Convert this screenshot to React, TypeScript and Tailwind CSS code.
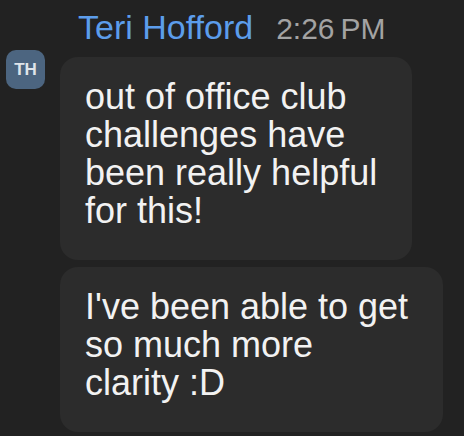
import React from "react";

const font = { fontFamily: '"Liberation Sans", Arial, sans-serif' };

function Bubble({ lines, width }: { lines: string[]; width: string }) {
  return (
    <div
      className={`${width} rounded-[18px] bg-[#2c2c2c] pl-[25px] pt-[21px] pb-[30px] text-[36px] leading-[38px] text-[#f2f2f2]`}
    >
      {lines.map((l) => (
        <div key={l} className="whitespace-nowrap">
          {l}
        </div>
      ))}
    </div>
  );
}

export default function App() {
  return (
    <div className="flex h-[436px] w-[464px] overflow-hidden bg-[#222222]" style={font}>
      <div className="w-[60px] shrink-0 pl-[6px] pt-[50px]">
        <div className="flex h-[39px] w-[39px] items-center justify-center rounded-[10px] bg-[#4c6580] text-[17px] font-bold text-[#dfe4ea]">
          TH
        </div>
      </div>
      <div className="flex flex-col">
        <div className="flex items-baseline gap-[23px] pl-[18px] pt-[7px] pb-[8px] leading-[40px]">
          <span className="text-[34px] text-[#5c9deb]">Teri Hofford</span>
          <span className="text-[30px] text-[#a3a3a3]">2:26&#8239;PM</span>
        </div>
        <div className="flex flex-col gap-[7px]">
          <Bubble
            width="w-[352px]"
            lines={["out of office club", "challenges have", "been really helpful", "for this!"]}
          />
          <Bubble
            width="w-[383px]"
            lines={["I've been able to get", "so much more", "clarity :D"]}
          />
        </div>
      </div>
    </div>
  );
}
